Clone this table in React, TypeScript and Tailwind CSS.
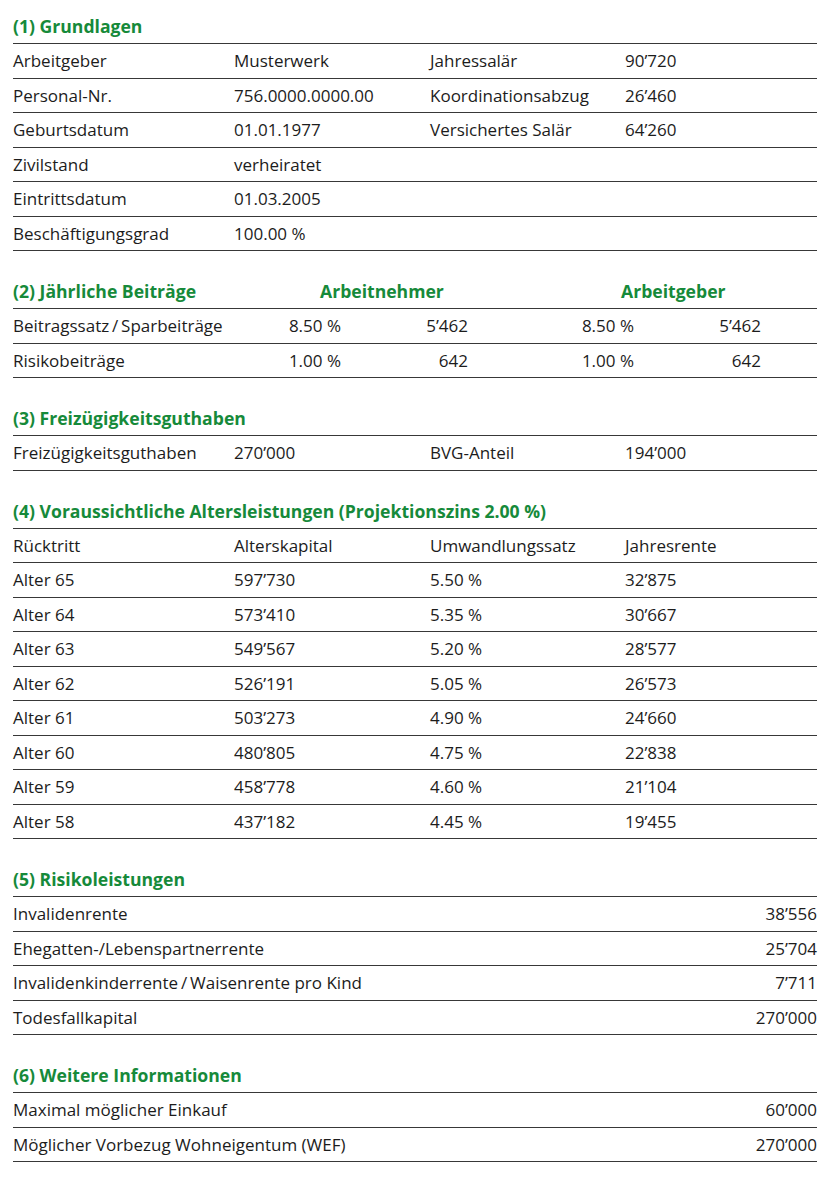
const GREEN = 'text-[#168a3a]'

function Header({ children }: { children: React.ReactNode }) {
  return (
    <div className={`h-[34.5px] flex items-center border-b border-[#383838] font-bold text-[17.6px] ${GREEN}`}>
      {children}
    </div>
  )
}

function Row4({ a, b, c, d }: { a: string; b?: string; c?: string; d?: string }) {
  return (
    <div className="h-[34.5px] grid grid-cols-[221px_196px_195px_1fr] items-center border-b border-[#383838]">
      <span>{a}</span>
      <span>{b}</span>
      <span>{c}</span>
      <span>{d}</span>
    </div>
  )
}

function RowRight({ label, value }: { label: string; value: string }) {
  return (
    <div className="h-[34.5px] flex items-center justify-between border-b border-[#383838]">
      <span>{label}</span>
      <span>{value}</span>
    </div>
  )
}

const alter = [
  ['Alter 65', '597’730', '5.50 %', '32’875'],
  ['Alter 64', '573’410', '5.35 %', '30’667'],
  ['Alter 63', '549’567', '5.20 %', '28’577'],
  ['Alter 62', '526’191', '5.05 %', '26’573'],
  ['Alter 61', '503’273', '4.90 %', '24’660'],
  ['Alter 60', '480’805', '4.75 %', '22’838'],
  ['Alter 59', '458’778', '4.60 %', '21’104'],
  ['Alter 58', '437’182', '4.45 %', '19’455'],
]

const beitraege = [
  ['Beitragssatz\u2009/\u2009Sparbeiträge', '8.50 %', '5’462', '8.50 %', '5’462'],
  ['Risikobeiträge', '1.00 %', '642', '1.00 %', '642'],
]

export default function App() {
  return (
    <div className="min-h-[1185px] bg-white text-[#1c1c1c] text-[17px] font-['Open_Sans',sans-serif]">
      <div className="ml-[13px] w-[804px] pt-[9.5px]">
        <section>
          <Header>(1) Grundlagen</Header>
          <Row4 a="Arbeitgeber" b="Musterwerk" c="Jahressalär" d="90’720" />
          <Row4 a="Personal-Nr." b="756.0000.0000.00" c="Koordinationsabzug" d="26’460" />
          <Row4 a="Geburtsdatum" b="01.01.1977" c="Versichertes Salär" d="64’260" />
          <Row4 a="Zivilstand" b="verheiratet" />
          <Row4 a="Eintrittsdatum" b="01.03.2005" />
          <Row4 a="Beschäftigungsgrad" b="100.00 %" />
        </section>

        <section className="mt-[23.5px]">
          <div className={`h-[34.5px] grid grid-cols-[307px_301px_1fr] items-center border-b border-[#383838] font-bold text-[17.6px] ${GREEN}`}>
            <span>(2) Jährliche Beiträge</span>
            <span>Arbeitnehmer</span>
            <span>Arbeitgeber</span>
          </div>
          {beitraege.map(r => (
            <div key={r[0]} className="h-[34.5px] grid grid-cols-[220px_108px_127px_166px_127px_1fr] items-center border-b border-[#383838]">
              <span>{r[0]}</span>
              <span className="text-right">{r[1]}</span>
              <span className="text-right">{r[2]}</span>
              <span className="text-right">{r[3]}</span>
              <span className="text-right">{r[4]}</span>
              <span />
            </div>
          ))}
        </section>

        <section className="mt-[23.5px]">
          <Header>(3) Freizügigkeitsguthaben</Header>
          <Row4 a="Freizügigkeitsguthaben" b="270’000" c="BVG-Anteil" d="194’000" />
        </section>

        <section className="mt-[23.5px]">
          <Header>(4) Voraussichtliche Altersleistungen (Projektionszins 2.00 %)</Header>
          <Row4 a="Rücktritt" b="Alterskapital" c="Umwandlungssatz" d="Jahresrente" />
          {alter.map(r => (
            <Row4 key={r[0]} a={r[0]} b={r[1]} c={r[2]} d={r[3]} />
          ))}
        </section>

        <section className="mt-[23.5px]">
          <Header>(5) Risikoleistungen</Header>
          <RowRight label="Invalidenrente" value="38’556" />
          <RowRight label="Ehegatten-/Lebenspartnerrente" value="25’704" />
          <RowRight label={'Invalidenkinderrente\u2009/\u2009Waisenrente pro Kind'} value="7’711" />
          <RowRight label="Todesfallkapital" value="270’000" />
        </section>

        <section className="mt-[23.5px]">
          <Header>(6) Weitere Informationen</Header>
          <RowRight label="Maximal möglicher Einkauf" value="60’000" />
          <RowRight label="Möglicher Vorbezug Wohneigentum (WEF)" value="270’000" />
        </section>
      </div>
    </div>
  )
}
